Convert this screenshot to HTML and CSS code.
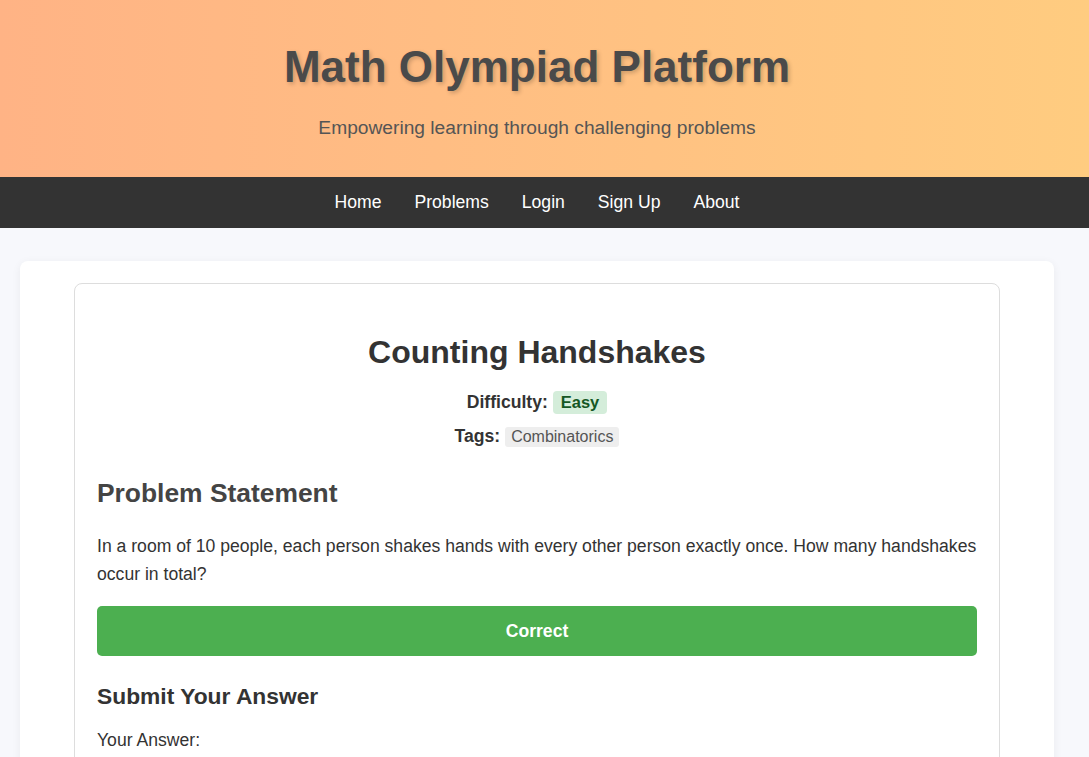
FILE: index.html
```html
<!DOCTYPE html>
<html lang="en">
<head>
<meta charset="utf-8">
<title>Math Olympiad Platform</title>
<link rel="stylesheet" href="styles.css">
</head>
<body>
<header class="hero">
  <h1 class="hero-title">Math Olympiad Platform</h1>
  <p class="hero-sub">Empowering learning through challenging problems</p>
</header>
<nav class="nav">
  <a href="#">Home</a>
  <a href="#">Problems</a>
  <a href="#">Login</a>
  <a href="#">Sign Up</a>
  <a href="#">About</a>
</nav>
<main class="container">
  <section class="problem">
    <h2 class="problem-title">Counting Handshakes</h2>
    <div class="meta"><strong>Difficulty:</strong> <span class="badge badge-easy">Easy</span></div>
    <div class="meta meta-tags"><strong>Tags:</strong> <span class="tag">Combinatorics</span></div>
    <h3 class="section-title">Problem Statement</h3>
    <p class="statement">In a room of 10 people, each person shakes hands with every other person exactly once. How many handshakes occur in total?</p>
    <div class="result">Correct</div>
    <h3 class="submit-title">Submit Your Answer</h3>
    <label class="answer-label">Your Answer:</label>
  </section>
</main>
</body>
</html>
```
FILE: styles.css
```css
* { box-sizing: border-box; }
body {
  margin: 0;
  font-family: "Liberation Sans", Arial, sans-serif;
  background: #f7f8fc;
  color: #333;
}
.hero {
  background: linear-gradient(90deg, #ffb385 0%, #ffcc80 100%);
  text-align: center;
  height: 177px;
  padding: 40px 15px 0 0;
}
.hero-title {
  margin: 0;
  font-size: 44px;
  line-height: 54px;
  font-weight: bold;
  color: #4a4a4a;
  text-shadow: 2px 2px 4px rgba(0,0,0,0.2);
}
.hero-sub {
  margin: 22px 0 0;
  font-size: 19.2px;
  line-height: 24px;
  color: #555;
}
.nav {
  background: #333;
  height: 51px;
  padding-right: 15px;
  display: flex;
  justify-content: center;
  align-items: center;
  gap: 33px;
}
.nav a {
  color: #fff;
  text-decoration: none;
  font-size: 17.6px;
}
.container {
  margin: 33px 35px 0 20px;
  background: #fff;
  border-radius: 8px;
  box-shadow: 0 2px 10px rgba(0,0,0,0.06);
  padding: 22px 0 20px;
}
.problem {
  max-width: 926px;
  margin: 0 auto;
  border: 1px solid #ddd;
  border-radius: 8px;
  padding: 48px 22px 20px;
}
.problem-title {
  text-align: center;
  margin: 0;
  font-size: 32px;
  line-height: 40px;
  color: #333;
}
.meta {
  text-align: center;
  font-size: 17.6px;
  margin-top: 19px;
}
.meta-tags { margin-top: 12px; }
.meta strong { color: #333; }
.badge {
  display: inline-block;
  padding: 2px 8px;
  border-radius: 4px;
  font-weight: bold;
  font-size: 16.5px;
  line-height: 19px;
}
.badge-easy {
  background: #d4edda;
  color: #155724;
}
.tag {
  display: inline-block;
  background: #eeeeee;
  color: #555;
  font-size: 16px;
  padding: 1px 6px;
  border-radius: 3px;
}
.section-title {
  margin: 30px 0 0;
  font-size: 26.4px;
  line-height: 32px;
  color: #444;
}
.statement {
  margin: 23px 0 0;
  font-size: 17.6px;
  line-height: 28px;
  color: #333;
}
.result {
  margin-top: 18px;
  background: #4caf50;
  color: #fff;
  font-weight: bold;
  font-size: 17.6px;
  height: 50px;
  line-height: 50px;
  text-align: center;
  border-radius: 5px;
}
.submit-title {
  margin: 26px 0 0;
  font-size: 22.8px;
  line-height: 28px;
  color: #333;
}
.answer-label {
  display: block;
  margin-top: 20px;
  font-size: 17.6px;
  color: #333;
}
```
